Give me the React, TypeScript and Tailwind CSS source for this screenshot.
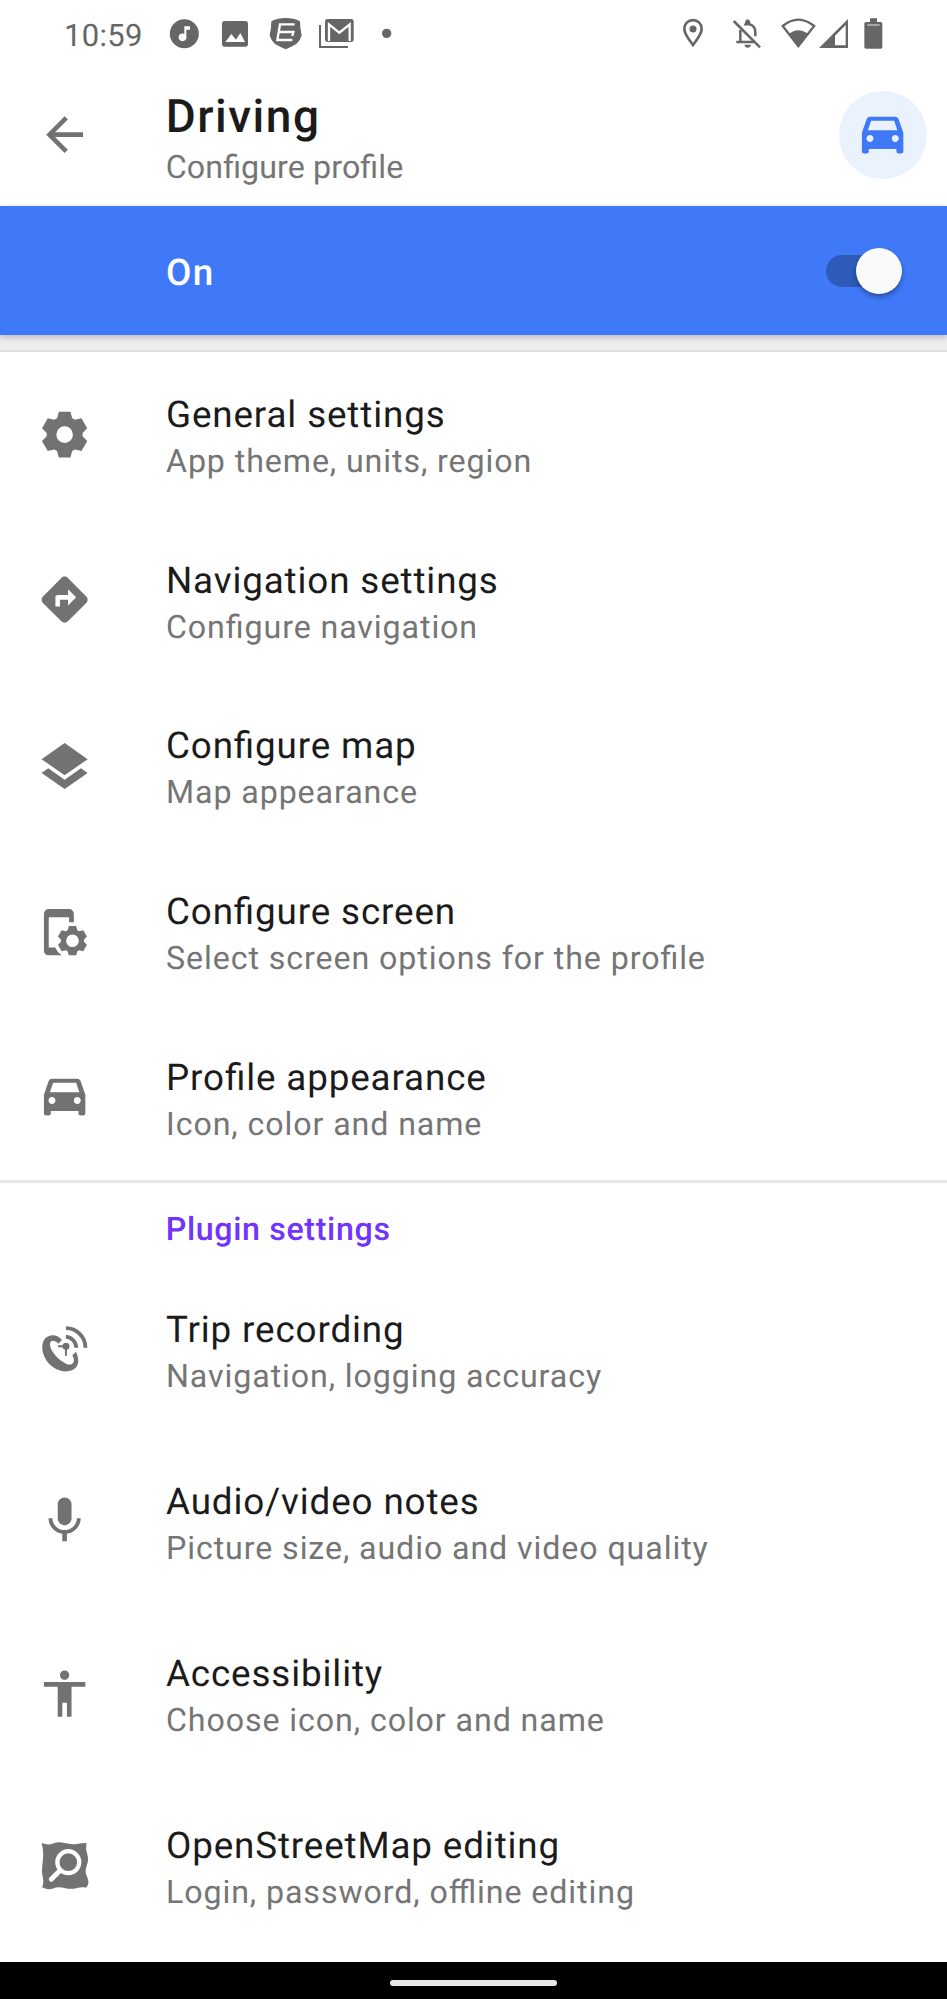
import type { ReactNode } from 'react';
import { MdAccessibility, MdArrowBack, MdDirections, MdMic } from 'react-icons/md';

/** Points of one gear tooth, relative to the centre of a gear with radius 10. */
const TOOTH: [number, number][] = [
  [-3.3, -7.1],
  [-2.5, -9.9],
  [2.5, -9.9],
  [3.3, -7.1],
];

function gearPath(cx: number, cy: number, scale: number, hole: number) {
  const points: string[] = [];
  for (let i = 0; i < 6; i++) {
    const a = (i * Math.PI) / 3;
    for (const [x, y] of TOOTH) {
      const px = cx + scale * (x * Math.cos(a) - y * Math.sin(a));
      const py = cy + scale * (x * Math.sin(a) + y * Math.cos(a));
      points.push(`${px.toFixed(2)} ${py.toFixed(2)}`);
    }
  }
  return `M${points.join('L')}Z M${cx - hole} ${cy}a${hole} ${hole} 0 1 0 ${hole * 2} 0a${hole} ${hole} 0 1 0 ${-hole * 2} 0Z`;
}

function Icon({ children }: { children: ReactNode }) {
  return (
    <svg viewBox="0 0 24 24" className="size-[55.25px]" fill="currentColor">
      {children}
    </svg>
  );
}

const GearIcon = () => (
  <Icon>
    <path fillRule="evenodd" d={gearPath(12, 12, 1, 3.6)} />
  </Icon>
);

const LayersIcon = () => (
  <Icon>
    <path d="M12 2.2 22 9.2 12 16.2 2 9.2zM2 15.2l2.9-2.05 7.1 5 7.1-5L22 15.2l-10 7z" />
  </Icon>
);

const ScreenIcon = () => (
  <Icon>
    <path d="M5 2.2h9a2 2 0 0 1 2 2v3.7h-2.1V5.8H5.1v13.1h2.8a8 8 0 0 0 2.8 3.4H5a2 2 0 0 1-2-2V4.2a2 2 0 0 1 2-2z" />
    <path fillRule="evenodd" d={gearPath(15.4, 15.95, 0.64, 2.75)} />
  </Icon>
);

const CarIcon = () => (
  <Icon>
    <path
      transform="translate(0 -0.8)"
      fillRule="evenodd"
      d="M18.92 6.01C18.72 5.42 18.16 5 17.5 5h-11c-.66 0-1.21.42-1.42 1.01L3 12v8c0 .55.45 1 1 1h1c.55 0 1-.45 1-1v-1h12v1c0 .55.45 1 1 1h1c.55 0 1-.45 1-1v-8l-2.08-5.99zM6.5 16c-.83 0-1.5-.67-1.5-1.5S5.67 13 6.5 13s1.5.67 1.5 1.5S7.33 16 6.5 16zm11 0c-.83 0-1.5-.67-1.5-1.5s.67-1.5 1.5-1.5 1.5.67 1.5 1.5-.67 1.5-1.5 1.5zM5.6 10.9 7 6.8h10l1.4 4.1z"
    />
  </Icon>
);

const SatelliteIcon = () => (
  <svg viewBox="1.2 3.9 165.7 165.7" className="size-[55.25px]">
    <path
      d="M76 60C66 50 56 46 46 47C28 49 17 62 17 82C17 118 48 155 88 155C112 155 125 141 125 124C125 114 122 105 118 96L107 107C112 114 113 121 111 127C108 135 98 137 88 132C66 121 42 96 40 76C39 62 51 58 66 72Z"
      fill="currentColor"
    />
    <circle cx="88" cy="80" r="10.5" fill="currentColor" />
    <path d="M88 80V108M88 80H64" stroke="currentColor" strokeWidth="6" fill="none" />
    <path d="M88 25.5A58.5 58.5 0 0 1 146.5 84M88 51A34 34 0 0 1 119 84" stroke="currentColor" strokeWidth="11.5" fill="none" />
  </svg>
);

const OsmIcon = () => (
  <Icon>
    <path d="M2 2.2Q4.7 3.3 7 2.4T12 2.2T17 2.6T21.5 2.2Q21 4.6 21.8 7T21.6 12T21.8 17T21.5 21.5Q19 21.2 17 21.8T12 21.7T7 21.9T2.2 21.4Q3.1 19 2.5 17T2.3 12T2.7 7T2 2.2z" />
    <circle cx="13.6" cy="10.5" r="4.75" fill="none" stroke="white" strokeWidth="1.85" />
    <path d="m10.1 14-3.9 3.9" stroke="white" strokeWidth="2.1" strokeLinecap="round" />
  </Icon>
);

type Item = { icon: ReactNode; title: string; summary: string };

const profileItems: Item[] = [
  { icon: <GearIcon />, title: 'General settings', summary: 'App theme, units, region' },
  { icon: <MdDirections className="size-[55.25px]" />, title: 'Navigation settings', summary: 'Configure navigation' },
  { icon: <LayersIcon />, title: 'Configure map', summary: 'Map appearance' },
  { icon: <ScreenIcon />, title: 'Configure screen', summary: 'Select screen options for the profile' },
  { icon: <CarIcon />, title: 'Profile appearance', summary: 'Icon, color and name' },
];

const pluginItems: Item[] = [
  { icon: <SatelliteIcon />, title: 'Trip recording', summary: 'Navigation, logging accuracy' },
  { icon: <MdMic className="size-[55.25px]" />, title: 'Audio/video notes', summary: 'Picture size, audio and video quality' },
  { icon: <MdAccessibility className="size-[55.25px]" />, title: 'Accessibility', summary: 'Choose icon, color and name' },
  { icon: <OsmIcon />, title: 'OpenStreetMap editing', summary: 'Login, password, offline editing' },
];

function Row({ item, tall }: { item: Item; tall?: boolean }) {
  return (
    <li className={`flex items-center pl-[37px] ${tall ? 'h-[172.1px]' : 'h-[165.7px]'}`}>
      <span className="w-[129px] shrink-0 text-[#727272]">{item.icon}</span>
      <div className="flex flex-col gap-[5px] pt-[4.5px] whitespace-nowrap">
        <span className="text-[36.8px] leading-[44px] tracking-[0.86px] text-[#1b1b1b]">{item.title}</span>
        <span className="text-[32.2px] leading-[38px] tracking-[0.9px] text-[#757575]">{item.summary}</span>
      </div>
    </li>
  );
}

function StatusBar() {
  return (
    <div className="flex h-[68px] shrink-0 items-start pt-[17px] pr-[64px] pl-[64px] text-[#666666]">
      <span className="w-[105px] pt-[0.5px] text-[31px] leading-[36px] tracking-[0.3px] whitespace-nowrap">10:59</span>

      <svg className="h-[34px] w-[30px]" viewBox="387 51 90 102">
        <circle cx="433" cy="101" r="43.5" fill="currentColor" />
        <circle cx="427.5" cy="112" r="11.5" fill="white" />
        <path d="M433 79h17v10h-11v24h-6z" fill="white" />
      </svg>
      <svg className="ml-[22px] h-[34px] w-[28px]" viewBox="543 51 84 102">
        <rect x="546" y="63" width="78" height="77" rx="8" fill="currentColor" />
        <path d="m556 126 18-24 14 17 13-20 14 27z" fill="white" />
      </svg>
      <svg className="ml-[20px] h-[34px] w-[33px]" viewBox="687 51 99 102">
        <path d="M737 54q24 0 43 10 0 22 5 42-3 14-16 26-14 8-32 16-18-8-32-16-13-12-16-26 5-20 5-42 19-10 43-10z" fill="currentColor" />
        <path d="M764 73h-44l-8 47h45M717 96h43l-3 12" fill="none" stroke="white" strokeWidth="7" />
      </svg>
      <svg className="ml-[16px] h-[34px] w-[36px]" viewBox="834 51 108 102">
        <rect x="855" y="57" width="86" height="69" rx="8" fill="currentColor" />
        <path d="M867 123V73l31 25 31-25v50" fill="none" stroke="white" strokeWidth="7" />
        <path d="M840 75v66h84" fill="none" stroke="currentColor" strokeWidth="6" />
      </svg>
      <svg className="ml-[27px] h-[34px] w-[11px]" viewBox="1023 51 33 102">
        <circle cx="1040" cy="100" r="14" fill="currentColor" />
      </svg>

      <span className="grow" />

      <svg className="h-[34px] w-[22px]" viewBox="126 51 66 102">
        <path d="M159 60.5c-15 0-26 11.5-26 26 0 18 16 34 26 48.5 10-14.5 26-30.5 26-48.5 0-14.5-11-26-26-26z" fill="none" stroke="currentColor" strokeWidth="8" />
        <circle cx="159" cy="87" r="10.5" fill="currentColor" />
      </svg>
      <svg className="ml-[28px] h-[34px] w-[30px]" viewBox="276 51 90 102">
        <path d="M281 63l79 79" stroke="currentColor" strokeWidth="7.5" />
        <path d="M301 90v36M289 126h53M313 75q8-4 15-2 18 4 18 25v11" fill="none" stroke="currentColor" strokeWidth="7.5" />
        <path d="M315 73v-6q2-9 8-9t8 9v6zM313 134h20q-2 9-10 9t-10-9z" fill="currentColor" />
      </svg>
      <svg className="ml-[18px] h-[34px] w-[37px]" viewBox="420 51 111 102">
        <path d="M428 78q47-38 94.5 0L475 138z" fill="none" stroke="currentColor" strokeWidth="7" />
        <path d="M446 102q29-23 59 0l-30 40z" fill="currentColor" />
      </svg>
      <svg className="ml-[1px] h-[34px] w-[31px]" viewBox="534 51 93 102">
        <path fillRule="evenodd" d="M537 144l87-87v87zM585 136h32V75l-32 32z" fill="currentColor" />
      </svg>
      <svg className="ml-[14px] h-[34px] w-[20px]" viewBox="669 51 60 102">
        <path d="M690 55h21v11h11q5 0 5 5v70q0 5-5 5h-44q-5 0-5-5V71q0-5 5-5h12z" fill="currentColor" />
        <path d="M682 75h37" stroke="#c8c8c8" strokeWidth="4" />
      </svg>
    </div>
  );
}

export default function App() {
  return (
    <div className="flex h-[1999px] w-[947px] flex-col overflow-hidden bg-white font-['Roboto',sans-serif] [font-feature-settings:'liga'_1] [text-rendering:geometricPrecision]">
      <StatusBar />

      <header className="flex h-[138px] shrink-0 items-start pr-[20.5px] pl-[37px]">
        <MdArrowBack className="mt-[39px] size-[55.25px] text-[#727272]" />
        <div className="ml-[73.5px] flex grow flex-col pt-[20.5px] whitespace-nowrap">
          <h1 className="text-[46px] leading-[56px] font-medium tracking-[1.5px] text-[#1b1b1b]">Driving</h1>
          <p className="mt-[3.5px] text-[32.2px] leading-[38px] tracking-[0.1px] text-[#757575]">Configure profile</p>
        </div>
        <span className="mt-[23px] flex size-[88px] items-center justify-center rounded-full bg-[#eaf2fe] text-[#3f79f8]">
          <CarIcon />
        </span>
      </header>

      <section className="z-10 flex h-[128.5px] shrink-0 items-center justify-between bg-[#3f79f8] pr-[45px] pl-[166px] shadow-[0_2px_6px_rgba(0,0,0,0.25)]">
        <span className="pt-[5px] text-[36.8px] leading-[44px] font-medium tracking-[1.5px] text-white">On</span>
        <span className="mt-px flex h-[32px] w-[76px] items-center justify-end rounded-full bg-linear-to-r from-[#2d5bb7] from-80% to-transparent to-80%">
          <span className="size-[46px] shrink-0 rounded-full bg-[#fafafa] shadow-[0_3px_5px_rgba(0,0,0,0.35)]" />
        </span>
      </section>
      <div className="h-[17px] shrink-0 border-b-2 border-[#dedede] bg-[#eeeeee]" />

      <ul className="shrink-0">
        {profileItems.map((item) => (
          <Row key={item.title} item={item} />
        ))}
      </ul>
      <div className="h-[3px] shrink-0 bg-[#e6e6e6]" />

      <h2 className="h-[80px] shrink-0 pt-[26px] pl-[165.7px] text-[32.2px] leading-[40px] font-medium tracking-[0.65px] text-[#7233fb]">
        Plugin settings
      </h2>
      <ul className="shrink-0">
        {pluginItems.map((item) => (
          <Row key={item.title} item={item} tall />
        ))}
      </ul>

      <footer className="mt-auto flex h-[37px] shrink-0 justify-center bg-black pt-[18px]">
        <span className="h-[6px] w-[167px] rounded-full bg-[#e8e8e8]" />
      </footer>
    </div>
  );
}
